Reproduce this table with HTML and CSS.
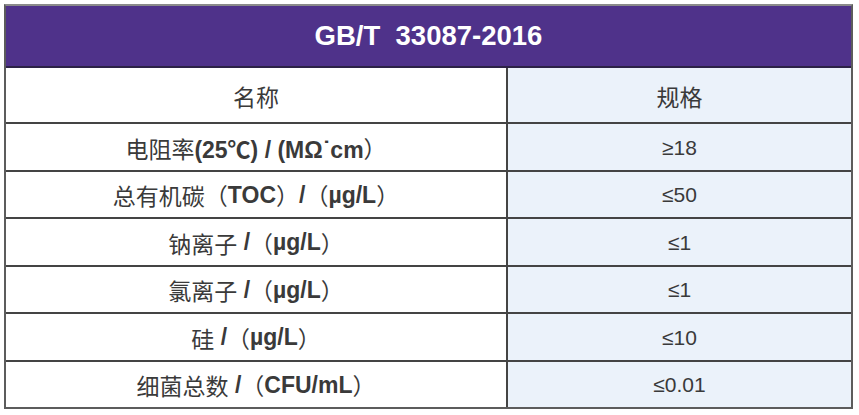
FILE: index.html
```html
<!DOCTYPE html>
<html lang="zh">
<head>
<meta charset="utf-8">
<title>GB/T 33087-2016</title>
<link rel="stylesheet" href="styles.css">
</head>
<body>
<div class="spec-table">
  <div class="head">GB/T&nbsp; 33087-2016</div>
  <div class="row row-title">
    <div class="cell name">名称</div>
    <div class="cell val">规格</div>
  </div>
  <div class="row">
    <div class="cell name">电阻率<b>(25℃) / (MΩ˙cm</b>）</div>
    <div class="cell val">≥18</div>
  </div>
  <div class="row">
    <div class="cell name">总有机碳（<b>TOC</b>）<b>/</b>（<b>µg/L</b>）</div>
    <div class="cell val">≤50</div>
  </div>
  <div class="row">
    <div class="cell name">钠离子 <b>/</b>（<b>µg/L</b>）</div>
    <div class="cell val">≤1</div>
  </div>
  <div class="row">
    <div class="cell name">氯离子 <b>/</b>（<b>µg/L</b>）</div>
    <div class="cell val">≤1</div>
  </div>
  <div class="row">
    <div class="cell name">硅 <b>/</b>（<b>µg/L</b>）</div>
    <div class="cell val">≤10</div>
  </div>
  <div class="row">
    <div class="cell name">细菌总数 <b>/</b>（<b>CFU/mL</b>）</div>
    <div class="cell val">≤0.01</div>
  </div>
</div>
</body>
</html>
```
FILE: styles.css
```css
html, body {
  margin: 0;
  padding: 0;
  background: #ffffff;
}

.spec-table {
  margin: 4px 0 0 4px;
  width: 849px;
  box-sizing: border-box;
  border: 2px solid #5c5c5c;
  border-top-color: #8a8a8a;
  font-family: "Liberation Sans", "Noto Sans CJK SC", sans-serif;
  color: #3a3a3a;
}

.head {
  height: 60px;
  background: #4f328a;
  border-bottom: 2px solid #2c2246;
  color: #ffffff;
  font-weight: bold;
  font-size: 27.5px;
  display: flex;
  align-items: center;
  justify-content: center;
}

.row {
  display: grid;
  grid-template-columns: 502px 1fr;
  height: 47.5px;
  box-sizing: border-box;
  border-bottom: 2px solid #444444;
}

.row-title {
  height: 56px;
}

.row:last-child {
  height: 45.5px;
  border-bottom: none;
}

.cell {
  display: flex;
  align-items: center;
  justify-content: center;
  white-space: pre;
  padding-top: 2px;
}

.name {
  border-right: 2px solid #444444;
  font-size: 23px;
}

.name b {
  font-weight: bold;
}

.val {
  background: #ebf2fa;
  font-size: 21px;
}

.row-title .val {
  font-size: 23px;
}
```
